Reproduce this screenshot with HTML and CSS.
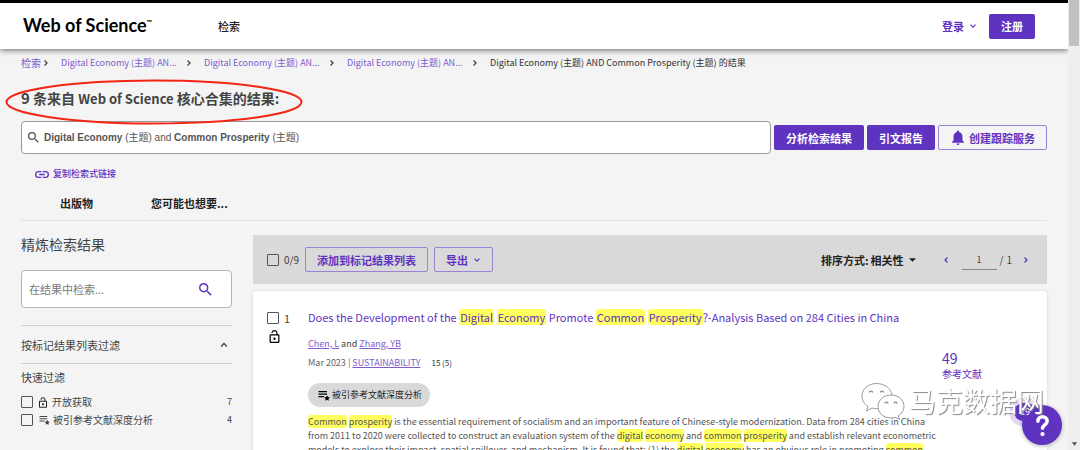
FILE: index.html
```html
<!DOCTYPE html>
<html lang="zh-CN">
<head>
<meta charset="utf-8">
<title>Web of Science</title>
<link rel="stylesheet" href="styles.css">
</head>
<body>
<svg class="defs" aria-hidden="true">
  <symbol id="right" viewBox="0 0 8 8"><path d="M2.5 1.500l2.500 2.500-2.500 2.500" fill="none" stroke="currentColor" stroke-width="1.3"/></symbol>
  <symbol id="left" viewBox="0 0 8 8"><path d="M5.5 1.500l-2.500 2.500 2.500 2.500" fill="none" stroke="currentColor" stroke-width="1.3"/></symbol>
  <symbol id="down" viewBox="0 0 8 8"><path d="M1.500 2.700l2.500 2.500 2.500-2.500" fill="none" stroke="currentColor" stroke-width="1.2"/></symbol>
  <symbol id="up" viewBox="0 0 8 8"><path d="M1 5.5l3-3 3 3" fill="none" stroke="currentColor" stroke-width="1.3"/></symbol>
  <symbol id="search" viewBox="3 3 18 18"><path fill="currentColor" d="M15.5 14h-.79l-.28-.27A6.47 6.47 0 0 0 16 9.500 6.500 6.500 0 1 0 9.500 16c1.610 0 3.090-.59 4.230-1.570l.27.28v.79l5 4.990L20.490 19l-4.990-5zm-6 0C7.010 14 5 11.990 5 9.500S7.010 5 9.500 5 14 7.010 14 9.500 11.990 14 9.500 14z"/></symbol>
  <symbol id="lock" viewBox="4 1 16 21"><path fill="currentColor" d="M12 17c1.100 0 2-.9 2-2s-.9-2-2-2-2 .9-2 2 .9 2 2 2zm6-9h-1V6c0-2.760-2.240-5-5-5S7 3.240 7 6h1.900c0-1.710 1.390-3.100 3.100-3.100s3.100 1.390 3.100 3.100v2H6c-1.100 0-2 .9-2 2v10c0 1.100.9 2 2 2h12c1.100 0 2-.9 2-2V10c0-1.100-.9-2-2-2zm0 12H6V10h12v10z"/></symbol>
  <symbol id="liststar" viewBox="0 0 24 22"><path fill="currentColor" d="M1 2h17v2.500H1zM1 7h17v2.500H1zM1 12h11v2.500H1zM18 10.500l1.800 3.600 4 .6-2.900 2.800.7 4-3.600-1.900-3.600 1.900.7-4-2.900-2.800 4-.6z"/></symbol>
</svg>
<div class="window">
  <div class="page">
    <header class="topbar">
      <a class="logo" href="#">Web of Science<sup>™</sup></a>
      <nav><a class="nav-link" href="#">检索</a></nav>
      <button class="signin" type="button">登录 <svg class="i8"><use href="#down"/></svg></button>
      <button class="btn solid" type="button">注册</button>
    </header>
    <main class="content">
      <nav class="crumbs" aria-label="面包屑">
        <span class="crumb first"><a href="#">检索</a><svg class="i8"><use href="#right"/></svg></span>
        <span class="crumb"><a href="#">Digital Economy (主题) AN...</a><svg class="i8"><use href="#right"/></svg></span>
        <span class="crumb"><a href="#">Digital Economy (主题) AN...</a><svg class="i8"><use href="#right"/></svg></span>
        <span class="crumb"><a href="#">Digital Economy (主题) AN...</a><svg class="i8"><use href="#right"/></svg></span>
        <span class="here">Digital Economy (主题) AND Common Prosperity (主题) 的结果</span>
      </nav>
      <h1 class="headline"><span class="count">9</span> 条来自 <span class="latin">Web of Science</span> 核心合集的结果:
        <svg class="ring" viewBox="0 0 298 46" aria-hidden="true"><ellipse cx="149" cy="23" rx="147.500" ry="21.500"/></svg>
      </h1>
      <div class="query-row">
        <button class="query" type="button"><svg class="i11"><use href="#search"/></svg><span><b>Digital Economy</b> (主题) and <b>Common Prosperity</b> (主题)</span></button>
        <button class="btn solid" type="button">分析检索结果</button>
        <button class="btn solid" type="button">引文报告</button>
        <button class="btn line alert" type="button"><svg class="bell" viewBox="4 2 16 20"><path fill="currentColor" d="M12 22c1.100 0 2-.9 2-2h-4c0 1.100.9 2 2 2zm6-6v-5c0-3.070-1.630-5.640-4.500-6.320V4c0-.83-.67-1.500-1.500-1.500s-1.500.67-1.500 1.500v.68C7.640 5.360 6 7.920 6 11v5l-2 2v1h16v-1l-2-2z"/></svg>创建跟踪服务</button>
      </div>
      <a class="copy" href="#"><svg class="chain" viewBox="2 7 20 10"><path fill="currentColor" d="M3.900 12c0-1.710 1.390-3.100 3.100-3.100h4V7H7a5 5 0 0 0 0 10h4v-1.900H7c-1.710 0-3.100-1.390-3.100-3.100zM8 13h8v-2H8v2zm9-6h-4v1.900h4a3.100 3.100 0 0 1 0 6.200h-4V17h4a5 5 0 0 0 0-10z"/></svg>复制检索式链接</a>
      <nav class="tabs"><a href="#">出版物</a><a href="#">您可能也想要...</a></nav>
      <div class="columns">
        <aside class="side">
          <h2>精炼检索结果</h2>
          <div class="within"><input type="text" placeholder="在结果中检索..." aria-label="在结果中检索"><button type="button" aria-label="检索"><svg class="i12"><use href="#search"/></svg></button></div>
          <button class="fold" type="button">按标记结果列表过滤<svg class="i8"><use href="#up"/></svg></button>
          <h3>快速过滤</h3>
          <label class="filter"><input class="box" type="checkbox"><svg class="lock-s"><use href="#lock"/></svg><span>开放获取</span><span class="num">7</span></label>
          <label class="filter"><input class="box" type="checkbox"><svg class="star-s"><use href="#liststar"/></svg><span>被引参考文献深度分析</span><span class="num">4</span></label>
        </aside>
        <section class="results">
          <div class="toolbar">
            <label class="pick"><input class="box" type="checkbox">0/9</label>
            <button class="btn line" type="button">添加到标记结果列表</button>
            <button class="btn line" type="button">导出 <svg class="i8"><use href="#down"/></svg></button>
            <label class="sort">排序方式: <select><option>相关性</option></select><svg class="caret" viewBox="0 0 8 4"><path d="M0 0h8L4 4z" fill="currentColor"/></svg></label>
            <div class="pager">
              <button type="button" aria-label="上一页"><svg class="i8"><use href="#left"/></svg></button>
              <input type="text" value="1" aria-label="页码"><span>/</span><span>1</span>
              <button type="button" aria-label="下一页"><svg class="i8"><use href="#right"/></svg></button>
            </div>
          </div>
          <article class="card">
            <div class="mark-col"><label class="pick"><input class="box" type="checkbox">1</label><svg class="lock-m"><use href="#lock"/></svg></div>
            <div class="record">
              <h2><a href="#">Does the Development of the <mark>Digital</mark> <mark>Economy</mark> Promote <mark>Common</mark> <mark>Prosperity</mark>?-Analysis Based on 284 Cities in China</a></h2>
              <p class="authors"><a href="#">Chen, L</a> and <a href="#">Zhang, YB</a></p>
              <p class="source">Mar 2023 | <a href="#">SUSTAINABILITY</a><span class="issue">15 (5)</span></p>
              <span class="chip"><svg class="star-m"><use href="#liststar"/></svg>被引参考文献深度分析</span>
              <p class="abstract"><mark>Common</mark> <mark>prosperity</mark> is the essential requirement of socialism and an important feature of Chinese-style modernization. Data from 284 cities in China<br>from 2011 to 2020 were collected to construct an evaluation system of the <mark>digital</mark> <mark>economy</mark> and <mark>common</mark> <mark>prosperity</mark> and establish relevant econometric<br>models to explore their impact, spatial spillover, and mechanism. It is found that: (1) the <mark>digital</mark> <mark>economy</mark> has an obvious role in promoting <mark>common</mark></p>
            </div>
            <a class="refs" href="#"><span class="refs-num">49</span><span>参考文献</span></a>
          </article>
        </section>
      </div>
    </main>
  </div>
  <div class="scroll"><div class="thumb"></div><svg class="caret" viewBox="0 0 8 4"><path d="M1 0h6L4 4z" fill="currentColor"/></svg></div>
</div>
<div class="help"><button type="button" aria-label="帮助"><svg viewBox="0 0 24 32"><path d="M5.500 10c0-8.500 13-8.500 13 0 0 5-6.500 5-6.500 10" fill="none" stroke="#fff" stroke-width="5" stroke-linecap="round"/><circle cx="12" cy="28" r="3" fill="#fff"/></svg></button><span class="badge">19</span></div>
<div class="watermark">
  <svg viewBox="0 0 44 38"><g fill="#fff" stroke="#999" stroke-width="1"><path d="M15.500 1.500C7 1.500 1 7 1 14c0 4.500 2.300 8 6 10.300L5.500 29l5.500-3c1.500.4 3 .6 4.500.6C24 26.600 31 21 31 14S24 1.500 15.500 1.500z"/><path d="M30 13c-7.500 0-13 5-13 11.500S22.500 36 30 36c1.500 0 3-.3 4.300-.7l4.200 2.200-1.200-3.700c3.400-2 5.700-5.300 5.700-9.300C43 18 37.500 13 30 13z"/></g><g fill="none" stroke="#777" stroke-width="1.200"><path d="M8.500 10.500c0-2 3-2 3 0M19.500 10.500c0-2 3-2 3 0M24 21.500c0-2 3-2 3 0M33 21.500c0-2 3-2 3 0"/></g></svg>
  <span>马克数据网</span>
</div>
</body>
</html>
```
FILE: styles.css
```css
* { box-sizing: border-box; }
body {
  margin: 0;
  height: 100vh;
  overflow: hidden;
  background: #f4f4f4;
  color: #444;
  font: 10px/14px "Noto Sans CJK SC", sans-serif;
}
h1, h2, h3, p { margin: 0; font-weight: 400; }
a { color: #5e33bf; text-decoration: none; }
button, input, select { font: inherit; color: inherit; }
button { background: none; border: 0; padding: 0; }
svg { display: block; flex: none; }
.defs { position: absolute; width: 0; height: 0; }
.i8 { width: 8px; height: 8px; }
.i11 { width: 11px; height: 11px; }
.i12 { width: 13px; height: 13px; color: #5e33bf; }

.window { display: flex; height: 100vh; }
.page { flex: 1; min-width: 0; overflow: hidden; }
.scroll {
  width: 12px;
  background: #efefef;
  display: flex;
  flex-direction: column;
  justify-content: space-between;
  align-items: center;
  padding-bottom: 4px;
}
.thumb { width: 10px; height: 46px; background: #c1c1c1; }
.scroll .caret { width: 7px; height: 4px; color: #505050; }

.topbar {
  display: flex;
  align-items: center;
  height: 49px;
  padding: 0 33px 0 23px;
  border-top: 3px solid #000;
  background: #fff;
  box-shadow: 0 1px 6px rgba(0, 0, 0, .6);
  position: relative;
}
.logo { color: #000; font: 700 18px/20px Lato, sans-serif; width: 195px; padding-bottom: 3px; }
.logo sup { font-size: 7px; line-height: 7px; vertical-align: 7px; }
.nav-link { color: #222; font-size: 11px; font-weight: 500; }
.signin { display: flex; align-items: center; gap: 5px; margin: 0 12px 0 auto; color: #5e33bf; font-size: 11px; font-weight: 700; }
.btn {
  display: flex;
  align-items: center;
  gap: 5px;
  height: 25px;
  padding: 0 12px;
  border-radius: 2px;
  font-size: 11px;
  font-weight: 700;
  white-space: nowrap;
}
.solid { background: #5e33bf; color: #fff; }
.line { border: 1px solid #9b82d6; color: #5e33bf; padding: 0 11px; }

.content { padding: 7px 21px 0; }
.crumbs { display: flex; font-size: 9px; white-space: nowrap; }
.crumb { display: flex; align-items: center; width: 143px; gap: 8px; }
.crumb.first { width: 40px; gap: 1px; font-size: 10px; }
.crumb a { color: #7e5ccb; }
.here { color: #333; }
.headline {
  position: relative;
  width: max-content;
  margin-top: 18px;
  font-size: 14px;
  line-height: 20px;
  font-weight: 700;
}
.count { font-size: 15px; }
.latin { font-size: 13px; }
.ring { position: absolute; left: -16px; top: -9px; width: 298px; height: 46px; }
.ring ellipse { fill: none; stroke: #f22613; stroke-width: 2; }
.query-row { display: flex; align-items: center; gap: 3px; margin-top: 12px; }
.query {
  flex: 1;
  display: flex;
  align-items: center;
  gap: 5px;
  height: 33px;
  padding: 0 6px;
  border: 1px solid #999;
  border-radius: 4px;
  background: #fff;
  color: #555;
  font: 10px/16px "Liberation Sans", "Noto Sans CJK SC", sans-serif;
}
.alert { padding: 0 11px 0 13px; }
.bell { width: 12px; height: 15px; }
.copy { display: flex; align-items: center; gap: 4px; margin: 13px 0 0 14px; font-size: 9px; font-weight: 500; }
.chain { width: 14px; height: 7px; }
.tabs {
  display: flex;
  gap: 58px;
  padding: 14px 39px 8px;
  border-bottom: 1px solid #e2e2e2;
}
.tabs a { color: #222; font-size: 11px; line-height: 17px; font-weight: 700; }

.columns { display: flex; gap: 21px; padding-top: 14px; }
.side { width: 211px; }
.side h2 { font-size: 14px; line-height: 18px; }
.within {
  display: flex;
  align-items: center;
  height: 38px;
  margin: 17px 0;
  padding: 0 19px 0 7px;
  border: 1px solid #b5b5b5;
  border-radius: 4px;
  background: #fff;
}
.within input { flex: 1; min-width: 0; border: 0; padding: 0; background: none; font-size: 11px; outline: 0; }
.within input::placeholder { color: #777; }
.fold {
  display: flex;
  align-items: center;
  justify-content: space-between;
  width: 100%;
  height: 39px;
  padding-right: 4px;
  border-top: 1px solid #d0d0d0;
  border-bottom: 1px solid #d0d0d0;
  font-size: 11px;
}
.side h3 { margin: 5px 0 7px; font-size: 11px; line-height: 17px; }
.filter { display: flex; align-items: center; height: 18px; }
.filter svg { margin: 0 5px 0 6px; }
.num { margin-left: auto; font-size: 9px; }
.box { appearance: none; width: 12px; height: 12px; margin: 0; border: 1px solid #555; border-radius: 1px; flex: none; }
.lock-s { width: 8px; height: 11px; color: #222; }
.lock-m { width: 11px; height: 13px; color: #000; margin: 5px 0 0 2px; }
.filter .star-s { width: 11px; height: 10px; margin-right: 3px; }
.star-m { width: 12px; height: 11px; color: #000; }

.results { flex: 1; min-width: 0; }
.toolbar {
  display: flex;
  align-items: center;
  gap: 6px;
  height: 49px;
  padding: 0 15px 0 14px;
  background: #d9d9d9;
}
.pick { display: flex; align-items: center; gap: 5px; }
.sort { display: flex; align-items: center; margin-left: auto; color: #222; font-size: 11px; font-weight: 700; }
.sort select { appearance: none; border: 0; padding: 0; margin: 0 5px 0 2px; background: none; }
.sort .caret { width: 7px; height: 4px; }
.pager { display: flex; align-items: center; gap: 3px; margin-left: 18px; }
.pager button { padding: 2px; color: #5e33bf; }
.pager input { width: 35px; height: 20px; margin-left: 7px; border: 0; border-bottom: 1px solid #888; padding: 0; background: none; text-align: center; font-size: 9px; }
.pager button:last-child { margin-left: 5px; }
.card {
  display: grid;
  grid-template-columns: 41px minmax(0, 1fr) 105px;
  margin-top: 7px;
  padding: 17px 0 20px 14px;
  border-radius: 3px;
  background: #fff;
  box-shadow: 0 0 3px rgba(0, 0, 0, .15);
}
.mark-col { padding-top: 3px; }
.mark-col .pick { font-size: 11px; }
.record h2 { font-size: 11px; line-height: 18px; white-space: nowrap; }
.record h2 mark { padding: 0 1px; }
mark { background: #ffff5e; color: inherit; border-radius: 3px; }
.authors { margin-top: 11px; font-size: 9px; }
.source { margin-top: 5px; font-size: 9px; color: #666; }
.record p a { color: #7e5ccb; text-decoration: underline; }
.issue { margin-left: 11px; color: #333; font-size: 8px; }
.chip {
  display: inline-flex;
  align-items: center;
  gap: 2px;
  height: 24px;
  margin-top: 13px;
  padding: 0 8px 0 10px;
  border-radius: 12px;
  background: #d9d9d9;
  color: #222;
  font-size: 9px;
}
.abstract { margin-top: 8px; font-size: 9px; color: #555; white-space: nowrap; }
.refs { display: flex; flex-direction: column; padding-top: 41px; }
.refs-num { font-size: 14px; line-height: 18px; }

.help { position: fixed; right: 18px; bottom: 5px; }
.help::before {
  content: "";
  position: absolute;
  left: -13px;
  top: -7px;
  width: 32px;
  height: 28px;
  border-radius: 14px;
  background: #e2daf5;
}
.help button {
  position: relative;
  display: flex;
  align-items: center;
  justify-content: center;
  width: 40px;
  height: 40px;
  border-radius: 50%;
  background: #5e33bf;
  box-shadow: 0 1px 4px rgba(0, 0, 0, .3);
}
.help svg { width: 17px; height: 23px; }
.badge {
  position: absolute;
  left: -8px;
  top: -2px;
  width: 22px;
  height: 18px;
  border-radius: 9px;
  background: #5e33bf;
  color: #fff;
  text-align: center;
  font-size: 9px;
  line-height: 18px;
}
.watermark {
  position: fixed;
  right: 36px;
  bottom: 30px;
  display: flex;
  align-items: center;
  gap: 4px;
  color: #fff;
  font-size: 27px;
  line-height: 36px;
  text-shadow: 1px 1px 1px #888;
  pointer-events: none;
}
.watermark svg { width: 44px; height: 38px; }
```
